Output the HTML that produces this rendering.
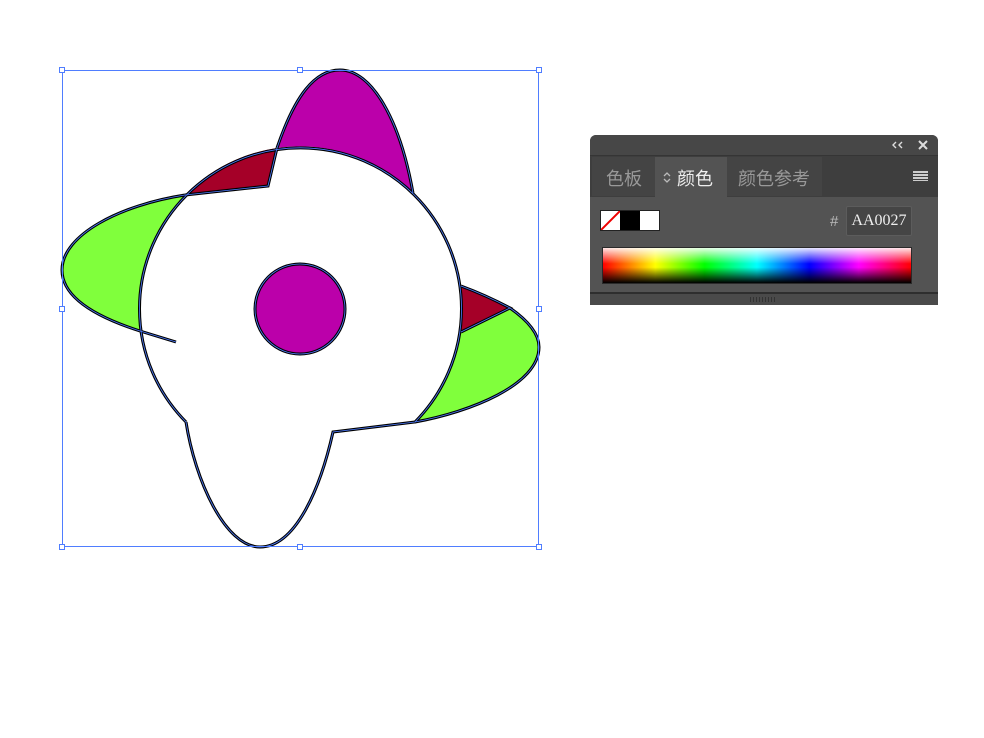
<!DOCTYPE html>
<html><head><meta charset="utf-8"><style>
html,body{margin:0;padding:0;background:#fff;width:984px;height:738px;overflow:hidden;font-family:"Liberation Sans","Noto Sans CJK SC",sans-serif;}
.p{position:absolute;}
</style></head><body>
<svg class="p" style="left:0;top:0" width="984" height="738">
<g stroke-linejoin="round">
<circle cx="299" cy="308" r="161" fill="#fff"/>
<path d="M277,148 C295,95 315,70 340,70 C372,70 400,120 413,193 A161,161 0 0 0 277,148Z" fill="#bb00aa"/>
<path d="M185,195 A161,161 0 0 1 277,148 L268,186 Z" fill="#a50028"/>
<path d="M185,195 C120,205 62,235 62,270 C62,295 90,315 140,331 A161,161 0 0 1 185,195Z" fill="#80ff3c"/>
<path d="M461,286 C480,293 495,300 510,308 L461,332 A161,161 0 0 0 461,286Z" fill="#a50028"/>
<path d="M510,308 C530,322 539,335 539,347 C539,385 470,412 415,422 A161,161 0 0 0 461,332 Z" fill="#80ff3c"/>
<path d="M186,422 L415,422 L333,432 C320,490 295,547 260,547 C225,547 195,480 186,422Z" fill="#fff"/>
<circle cx="300" cy="309" r="45" fill="#bb00aa"/>
</g>
<g fill="none">
<g stroke="#000" stroke-width="3">
<path d="M186,422 A161,161 0 1 1 415,422 L333,432 C320,490 295,547 260,547 C225,547 195,480 186,422"/>
<path d="M277,148 C295,95 315,70 340,70 C372,70 400,120 413,193"/>
<path d="M185,195 L268,186 L277,148"/>
<path d="M185,195 C120,205 62,235 62,270 C62,295 90,315 140,331 L176,342"/>
<path d="M461,286 C480,293 495,300 510,308 L461,332"/>
<path d="M510,308 C530,322 539,335 539,347 C539,385 470,412 415,422"/>
<circle cx="300" cy="309" r="45"/>
</g>
<g stroke="#4f7dff" stroke-width="0.8">
<path d="M186,422 A161,161 0 1 1 415,422 L333,432 C320,490 295,547 260,547 C225,547 195,480 186,422"/>
<path d="M277,148 C295,95 315,70 340,70 C372,70 400,120 413,193"/>
<path d="M185,195 L268,186 L277,148"/>
<path d="M185,195 C120,205 62,235 62,270 C62,295 90,315 140,331 L176,342"/>
<path d="M461,286 C480,293 495,300 510,308 L461,332"/>
<path d="M510,308 C530,322 539,335 539,347 C539,385 470,412 415,422"/>
<circle cx="300" cy="309" r="45"/>
</g>
</g>
<rect x="62.5" y="70.5" width="476" height="476" fill="none" stroke="#4f7dff" stroke-width="1"/>
<g fill="#fff" stroke="#4f7dff" stroke-width="1">
<rect x="59.5" y="67.5" width="5" height="5"/><rect x="297.5" y="67.5" width="5" height="5"/><rect x="536.5" y="67.5" width="5" height="5"/>
<rect x="59.5" y="306.5" width="5" height="5"/><rect x="536.5" y="306.5" width="5" height="5"/>
<rect x="59.5" y="544.5" width="5" height="5"/><rect x="297.5" y="544.5" width="5" height="5"/><rect x="536.5" y="544.5" width="5" height="5"/>
</g>
</svg>

<div class="p" style="left:590px;top:135px;width:348px;height:170px;background:#535353;border-radius:6px 6px 0 0;overflow:hidden;">
 <div class="p" style="left:0;top:0;width:348px;height:20px;background:#474747;"></div>
 <svg class="p" style="left:302px;top:6px" width="12" height="8"><path d="M4,1 L1,4 L4,7 M10,1 L7,4 L10,7" stroke="#ddd" stroke-width="1.4" fill="none"/></svg>
 <svg class="p" style="left:328px;top:5px" width="10" height="10"><path d="M1,1 L9,9 M9,1 L1,9" stroke="#ddd" stroke-width="2" fill="none"/></svg>
 <div class="p" style="left:0;top:20px;width:348px;height:41px;background:#3e3e3e;border-top:1px solid #353535;"></div>
 <div class="p" style="left:2px;top:22px;width:63px;height:39px;background:#444;"></div>
 <div class="p" style="left:65px;top:22px;width:72px;height:40px;background:#535353;"></div>
 <div class="p" style="left:137px;top:22px;width:95px;height:39px;background:#444;"></div>
 <div class="p" style="left:16px;top:30px;color:#999;font-size:18px;">色板</div>
 <svg class="p" style="left:73px;top:36px" width="8" height="13"><path d="M1,5 L4,2 L7,5 M1,8 L4,11 L7,8" stroke="#bbb" stroke-width="1.3" fill="none"/></svg>
 <div class="p" style="left:87px;top:30px;color:#eee;font-size:18px;">颜色</div>
 <div class="p" style="left:148px;top:30px;color:#999;font-size:18px;">颜色参考</div>
 <div class="p" style="left:323px;top:36px;width:15px;height:10px;background:repeating-linear-gradient(#ccc 0 2px,transparent 2px 3px);"></div>
 <div class="p" style="left:10px;top:75px;width:58px;height:19px;border:1px solid #222;background:#fff;overflow:hidden;">
  <div class="p" style="left:19px;top:0;width:20px;height:19px;background:#000;"></div>
  <svg class="p" style="left:0;top:0" width="19" height="19"><line x1="0" y1="19" x2="19" y2="0" stroke="#e00" stroke-width="2"/></svg>
 </div>
 <div class="p" style="left:240px;top:78px;color:#bbb;font-size:15px;">#</div>
 <div class="p" style="left:256px;top:71px;width:64px;height:28px;background:#454545;border:1px solid #5c5c5c;border-radius:2px;color:#eee;font-family:'Liberation Serif',serif;font-size:16px;line-height:28px;text-align:center;">AA0027</div>
 <div class="p" style="left:12px;top:112px;width:308px;height:35px;border:1px solid #2a2a2a;background:linear-gradient(to bottom,rgba(255,255,255,.9) 0%,rgba(255,255,255,0) 45%,rgba(0,0,0,0) 55%,rgba(0,0,0,1) 100%),linear-gradient(to right,#f00 0%,#ff0 17%,#0f0 33%,#0ff 50%,#00f 67%,#f0f 83%,#f00 100%);"></div>
 <div class="p" style="left:0;top:157px;width:348px;height:2px;background:#2e2e2e;"></div>
 <div class="p" style="left:0;top:159px;width:348px;height:11px;background:#4a4a4a;"></div>
 <div class="p" style="left:160px;top:162px;width:26px;height:5px;background:repeating-linear-gradient(to right,#333 0 1px,transparent 1px 3px);"></div>
</div>
</body></html>
